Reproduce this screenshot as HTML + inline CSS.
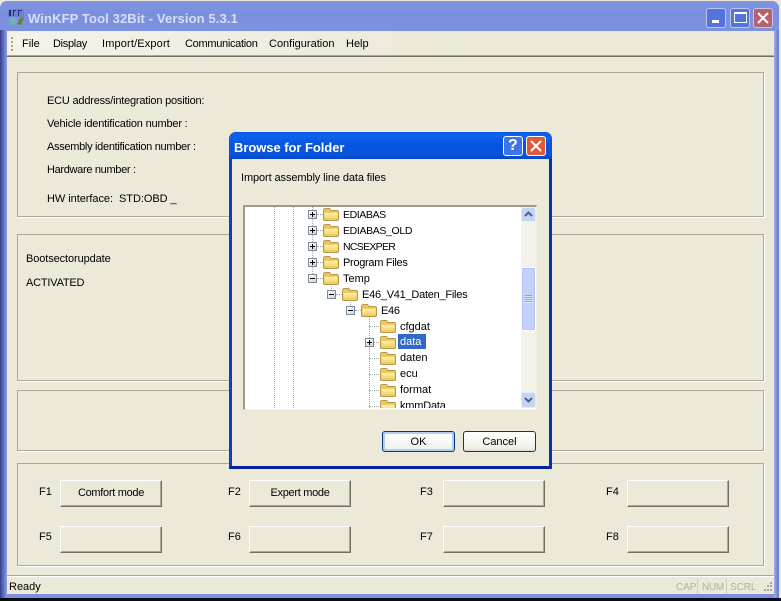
<!DOCTYPE html>
<html><head><meta charset="utf-8"><style>
html,body{margin:0;padding:0;background:#ece9d8}
#w{position:relative;width:781px;height:601px;overflow:hidden;background:#ece9d8;font-family:"Liberation Sans",sans-serif;font-size:11px;color:#000}
#w div,#w span.t,#w svg{position:absolute}
.t{position:absolute;white-space:nowrap;line-height:13px}
.p{box-sizing:border-box;left:17px;width:747px;border:1px solid #aca899;box-shadow:1px 1px 0 #fff}
.b{box-sizing:border-box;width:102px;height:27px;background:#ece9d8;border:1px solid;border-color:#fff #716f64 #716f64 #fff;box-shadow:inset -1px -1px 0 #aca899;text-align:center;line-height:25px;font-size:11px;letter-spacing:-.3px}
.m{top:38px;font-size:11px}
.l{left:47px;font-size:11px;letter-spacing:-.2px}
.f{font-size:11px}
.nd{width:9px;height:9px;box-sizing:border-box;border:1px solid #7b8a9c;background:linear-gradient(135deg,#fff,#d4d0c8)}
.nd::before{content:"";position:absolute;left:1px;top:3px;width:5px;height:1px;background:#000}
.pl::after{content:"";position:absolute;left:3px;top:1px;width:1px;height:5px;background:#000}
.v{width:0;border-left:1px dotted #a8a8a8}
.h{height:0;border-top:1px dotted #a8a8a8}
.tr{font-size:11px;line-height:13px}
</style></head><body><div id="w">
<svg width="0" height="0" style="left:0;top:0"><defs>
<linearGradient id="fg" x1="0" y1="0" x2="0" y2="1"><stop offset="0" stop-color="#fff3b4"/><stop offset="1" stop-color="#f2c94e"/></linearGradient>
<symbol id="fo" viewBox="0 0 16 14"><path d="M0.5 4 L0.5 12 Q0.5 13.5 2 13.5 L14 13.5 Q15.5 13.5 15.5 12 L15.5 5 Q15.5 3.5 14 3.5 L8 3.5 L6.5 1.5 L2.5 1.5 Q0.5 1.5 0.5 4Z" fill="#ecc860" stroke="#b8974a"/><path d="M1.5 6 L14.5 6 L14.5 12 Q14.5 12.8 13.5 12.8 L2.5 12.8 Q1.5 12.8 1.5 12Z" fill="url(#fg)"/></symbol></defs></svg>

<!-- outer frame -->
<div style="left:0;top:598px;width:781px;height:3px;background:#0a0a14"></div>
<div style="left:0;top:1px;width:779px;height:597px;background:#7e8fdb;border-radius:8px 8px 0 0"></div>
<div style="left:0;top:1px;width:779px;height:30px;background:linear-gradient(#8094e0,#7a90df 40%,#7d92de);border-radius:7px 7px 0 0"></div>
<div style="left:0;top:30px;width:7px;height:568px;background:linear-gradient(90deg,#34428a,#5a6cc0 45%,#8f9fe0)"></div>
<div style="left:774px;top:30px;width:5px;height:568px;background:linear-gradient(90deg,#a2aee6,#7e8fdb 50%,#6678c8)"></div>
<div style="left:7px;top:31px;width:767px;height:563px;background:#ece9d8"></div>

<!-- title bar -->
<svg style="left:8px;top:9px" width="17" height="17" viewBox="0 0 17 17"><rect x="0" y="0" width="16" height="8" fill="#6f80cc"/><path d="M1 1h2v6H1zM5 1h3v1H6v5H5zM10 1h4v1h-3v5h-1z" fill="#22307c"/><circle cx="5" cy="12" r="4" fill="#6fb0b5"/><path d="M9 15 L13 8 L16 9 L13 16Z" fill="#3f9a38"/><circle cx="12" cy="12" r="1.5" fill="#d8443c"/></svg>
<span class="t" style="left:28px;top:10px;font-size:13px;font-weight:bold;color:#d6def8;letter-spacing:.12px;line-height:17px">WinKFP Tool 32Bit - Version 5.3.1</span>

<div style="left:706px;top:8px;width:20px;height:20px;box-sizing:border-box;border:1px solid #b9c6ee;border-radius:3px;background:#5474dc"></div>
<div style="left:712px;top:20px;width:7px;height:3px;background:#fff"></div>
<div style="left:730px;top:8px;width:20px;height:20px;box-sizing:border-box;border:1px solid #b9c6ee;border-radius:3px;background:#5474dc"></div>
<div style="left:734px;top:12px;width:13px;height:11px;box-sizing:border-box;border:1px solid #fff;border-top-width:2px"></div>
<div style="left:753px;top:8px;width:20px;height:20px;box-sizing:border-box;border:1px solid #c6c6e8;border-radius:3px;background:#b8606f"></div>
<svg style="left:753px;top:8px" width="20" height="20"><path d="M5 5 L15 15 M15 5 L5 15" stroke="#fff" stroke-width="2"/></svg>

<!-- menu -->
<div style="left:7px;top:31px;width:767px;height:24px;background:linear-gradient(90deg,#f4f3ea,#ece9d8 60%)"></div>
<div style="left:7px;top:55px;width:767px;height:1px;background:#aca899"></div>
<div style="left:7px;top:56px;width:767px;height:1px;background:#716f64"></div>
<div style="left:11px;top:37px;width:2px;height:14px;background:repeating-linear-gradient(#a9a698 0 2px,transparent 2px 4px)"></div>
<span class="t m" style="left:22px">File</span>
<span class="t m" style="left:53px;letter-spacing:-.3px">Display</span>
<span class="t m" style="left:102px;letter-spacing:.15px">Import/Export</span>
<span class="t m" style="left:185px;letter-spacing:-.3px">Communication</span>
<span class="t m" style="left:269px">Configuration</span>
<span class="t m" style="left:346px">Help</span>

<!-- panels -->
<div class="p" style="top:72px;height:145px"></div>
<span class="t l" style="top:95px">ECU address/integration position:</span>
<span class="t l" style="top:118px;letter-spacing:-.18px">Vehicle identification number :</span>
<span class="t l" style="top:141px;letter-spacing:-.3px">Assembly identification number :</span>
<span class="t l" style="top:164px;letter-spacing:-.32px">Hardware number :</span>
<span class="t l" style="top:193px;letter-spacing:-.05px">HW interface:&nbsp; STD:OBD _</span>

<div class="p" style="top:234px;height:147px"></div>
<span class="t" style="left:26px;top:253px;font-size:11px;letter-spacing:-.1px">Bootsectorupdate</span>
<span class="t" style="left:26px;top:277px;font-size:11px;letter-spacing:-.2px">ACTIVATED</span>

<div class="p" style="top:390px;height:61px"></div>
<div class="p" style="top:463px;height:103px"></div>

<span class="t f" style="left:39px;top:486px">F1</span>
<div class="b" style="left:60px;top:480px">Comfort mode</div>
<span class="t f" style="left:228px;top:486px">F2</span>
<div class="b" style="left:249px;top:480px">Expert mode</div>
<span class="t f" style="left:420px;top:486px">F3</span>
<div class="b" style="left:443px;top:480px"></div>
<span class="t f" style="left:606px;top:486px">F4</span>
<div class="b" style="left:627px;top:480px"></div>
<span class="t f" style="left:39px;top:531px">F5</span>
<div class="b" style="left:60px;top:526px"></div>
<span class="t f" style="left:228px;top:531px">F6</span>
<div class="b" style="left:249px;top:526px"></div>
<span class="t f" style="left:420px;top:531px">F7</span>
<div class="b" style="left:443px;top:526px"></div>
<span class="t f" style="left:606px;top:531px">F8</span>
<div class="b" style="left:627px;top:526px"></div>

<!-- status -->
<div style="left:7px;top:575px;width:767px;height:1px;background:#aca899"></div>
<div style="left:7px;top:576px;width:767px;height:1px;background:#fff"></div>
<span class="t" style="left:9px;top:581px;font-size:11px">Ready</span>
<div style="left:697px;top:579px;width:1px;height:15px;background:#cfccbc"></div>
<div style="left:726px;top:579px;width:1px;height:15px;background:#cfccbc"></div>
<span class="t" style="left:676px;top:581px;font-size:10px;letter-spacing:-.1px;color:#b4b1a2">CAP</span>
<span class="t" style="left:702px;top:581px;font-size:10px;letter-spacing:-.3px;color:#b4b1a2">NUM</span>
<span class="t" style="left:730px;top:581px;font-size:10px;letter-spacing:-.1px;color:#b4b1a2">SCRL</span>
<svg style="left:761px;top:581px" width="12" height="13"><g fill="#aca899"><rect x="9" y="1" width="2" height="2"/><rect x="6" y="4" width="2" height="2"/><rect x="9" y="4" width="2" height="2"/><rect x="3" y="8" width="2" height="2"/><rect x="6" y="8" width="2" height="2"/><rect x="9" y="8" width="2" height="2"/></g></svg>

<!-- dialog -->
<div style="left:229px;top:132px;width:323px;height:337px;background:#0b3fc4;border-radius:7px 7px 0 0"></div>
<div style="left:229px;top:132px;width:323px;height:27px;background:linear-gradient(#0a5ae4,#0f62ee 15%,#0553e0 50%,#0a55dc 85%,#0447c4);border-radius:7px 7px 0 0"></div>
<div style="left:232px;top:159px;width:317px;height:307px;background:#ece9d8"></div>
<div style="left:229px;top:466px;width:323px;height:3px;background:#05249c"></div>
<div style="left:549px;top:159px;width:3px;height:310px;background:#0831b0"></div>
<span class="t" style="left:234px;top:140px;font-size:13px;font-weight:bold;color:#fff;letter-spacing:-.05px;line-height:16px">Browse for Folder</span>

<div style="left:503px;top:136px;width:20px;height:20px;box-sizing:border-box;border:1px solid #fff;border-radius:3px;background:#3f74e6"></div>
<span class="t" style="left:508px;top:137px;font-size:16px;line-height:18px;font-weight:bold;color:#fff">?</span>
<div style="left:526px;top:136px;width:20px;height:20px;box-sizing:border-box;border:1px solid #fff;border-radius:3px;background:#e2593a"></div>
<svg style="left:526px;top:136px" width="20" height="20"><path d="M5 5 L15 15 M15 5 L5 15" stroke="#fff" stroke-width="2"/></svg>

<span class="t" style="left:241px;top:172px;font-size:11px;letter-spacing:-.1px">Import assembly line data files</span>

<!-- tree -->
<div style="left:243px;top:205px;width:294px;height:205px;box-sizing:border-box;background:#fff;border:1px solid;border-color:#9d9a88 #f4f2e8 #f4f2e8 #9d9a88;border-top-width:2px;border-left-width:2px;overflow:hidden"></div>
<div style="left:245px;top:207px;width:276px;height:201px;overflow:hidden" id="tr">
<div class="v" style="left:29px;top:0;height:201px"></div>
<div class="v" style="left:48px;top:0;height:201px"></div>
<div class="v" style="left:67px;top:0;height:75px"></div>
<div class="v" style="left:86px;top:72px;height:18px"></div>
<div class="v" style="left:105px;top:88px;height:18px"></div>
<div class="v" style="left:124px;top:104px;height:97px"></div>

<div class="h" style="left:72px;top:7px;width:8px"></div>
<div class="nd pl" style="left:63px;top:3px"></div><svg style="left:78px;top:0" width="16" height="14"><use href="#fo"/></svg><span class="t tr" style="left:98px;top:2px;font-size:10.5px;letter-spacing:-.4px">EDIABAS</span>
<div class="h" style="left:72px;top:23px;width:8px"></div>
<div class="nd pl" style="left:63px;top:19px"></div><svg style="left:78px;top:16px" width="16" height="14"><use href="#fo"/></svg><span class="t tr" style="left:98px;top:18px;font-size:10.5px;letter-spacing:-.35px">EDIABAS_OLD</span>
<div class="h" style="left:72px;top:39px;width:8px"></div>
<div class="nd pl" style="left:63px;top:35px"></div><svg style="left:78px;top:32px" width="16" height="14"><use href="#fo"/></svg><span class="t tr" style="left:98px;top:34px;font-size:10.5px;letter-spacing:-.7px">NCSEXPER</span>
<div class="h" style="left:72px;top:55px;width:8px"></div>
<div class="nd pl" style="left:63px;top:51px"></div><svg style="left:78px;top:48px" width="16" height="14"><use href="#fo"/></svg><span class="t tr" style="left:98px;top:50px;letter-spacing:-.3px">Program Files</span>
<div class="h" style="left:72px;top:71px;width:8px"></div>
<div class="nd" style="left:63px;top:67px"></div><svg style="left:78px;top:64px" width="16" height="14"><use href="#fo"/></svg><span class="t tr" style="left:98px;top:66px">Temp</span>

<div class="h" style="left:91px;top:87px;width:8px"></div>
<div class="nd" style="left:82px;top:83px"></div><svg style="left:97px;top:80px" width="16" height="14"><use href="#fo"/></svg><span class="t tr" style="left:117px;top:82px;letter-spacing:-.25px">E46_V41_Daten_Files</span>
<div class="h" style="left:110px;top:103px;width:8px"></div>
<div class="nd" style="left:101px;top:99px"></div><svg style="left:116px;top:96px" width="16" height="14"><use href="#fo"/></svg><span class="t tr" style="left:136px;top:98px;letter-spacing:-.3px">E46</span>

<div class="h" style="left:124px;top:119px;width:12px"></div><svg style="left:135px;top:112px" width="16" height="14"><use href="#fo"/></svg><span class="t tr" style="left:155px;top:114px">cfgdat</span>
<div class="h" style="left:124px;top:135px;width:12px"></div><div class="nd pl" style="left:120px;top:131px"></div><svg style="left:135px;top:128px" width="16" height="14"><use href="#fo"/></svg>
<div style="left:153px;top:127px;width:28px;height:15px;background:#316ac5"></div><span class="t tr" style="left:155px;top:129px;color:#fff">data</span>
<div class="h" style="left:124px;top:151px;width:12px"></div><svg style="left:135px;top:144px" width="16" height="14"><use href="#fo"/></svg><span class="t tr" style="left:155px;top:145px">daten</span>
<div class="h" style="left:124px;top:167px;width:12px"></div><svg style="left:135px;top:160px" width="16" height="14"><use href="#fo"/></svg><span class="t tr" style="left:155px;top:161px">ecu</span>
<div class="h" style="left:124px;top:183px;width:12px"></div><svg style="left:135px;top:176px" width="16" height="14"><use href="#fo"/></svg><span class="t tr" style="left:155px;top:177px">format</span>
<div class="h" style="left:124px;top:199px;width:12px"></div><svg style="left:135px;top:192px" width="16" height="14"><use href="#fo"/></svg><span class="t tr" style="left:155px;top:193px;letter-spacing:-.2px">kmmData</span>
</div>

<!-- scrollbar -->
<div style="left:521px;top:207px;width:15px;height:201px;background:#f3f2ea"></div>
<div style="left:521px;top:207px;width:15px;height:15px;box-sizing:border-box;border:1px solid #e6ecf8;border-radius:2px;background:#c5d3f4"></div>
<svg style="left:521px;top:207px" width="15" height="15"><path d="M4 9 L7.5 5.5 L11 9" fill="none" stroke="#4d6185" stroke-width="2"/></svg>
<div style="left:521px;top:267px;width:15px;height:64px;box-sizing:border-box;border:1px solid #fff;border-radius:2px;background:#c3d2f8;box-shadow:inset 0 0 0 1px #b2c4f0"></div>
<div style="left:525px;top:295px;width:7px;height:8px;background:repeating-linear-gradient(#8ea4d8 0 1px,#dfe7fb 1px 2px)"></div>
<div style="left:521px;top:392px;width:15px;height:16px;box-sizing:border-box;border:1px solid #e6ecf8;border-radius:2px;background:#c5d3f4"></div>
<svg style="left:521px;top:392px" width="15" height="16"><path d="M4 6 L7.5 9.5 L11 6" fill="none" stroke="#4d6185" stroke-width="2"/></svg>

<!-- buttons -->
<div style="left:382px;top:431px;width:73px;height:21px;box-sizing:border-box;border:1px solid #003c74;border-radius:3px;background:linear-gradient(#fff,#f0f0ea);box-shadow:inset 0 0 0 2px #b4cdf0;text-align:center;line-height:20px;font-size:11px">OK</div>
<div style="left:463px;top:431px;width:73px;height:21px;box-sizing:border-box;border:1px solid #003c74;border-radius:3px;background:linear-gradient(#fff,#f0f0ea 85%,#dcd8c8);text-align:center;line-height:20px;font-size:11px">Cancel</div>
</div></body></html>
